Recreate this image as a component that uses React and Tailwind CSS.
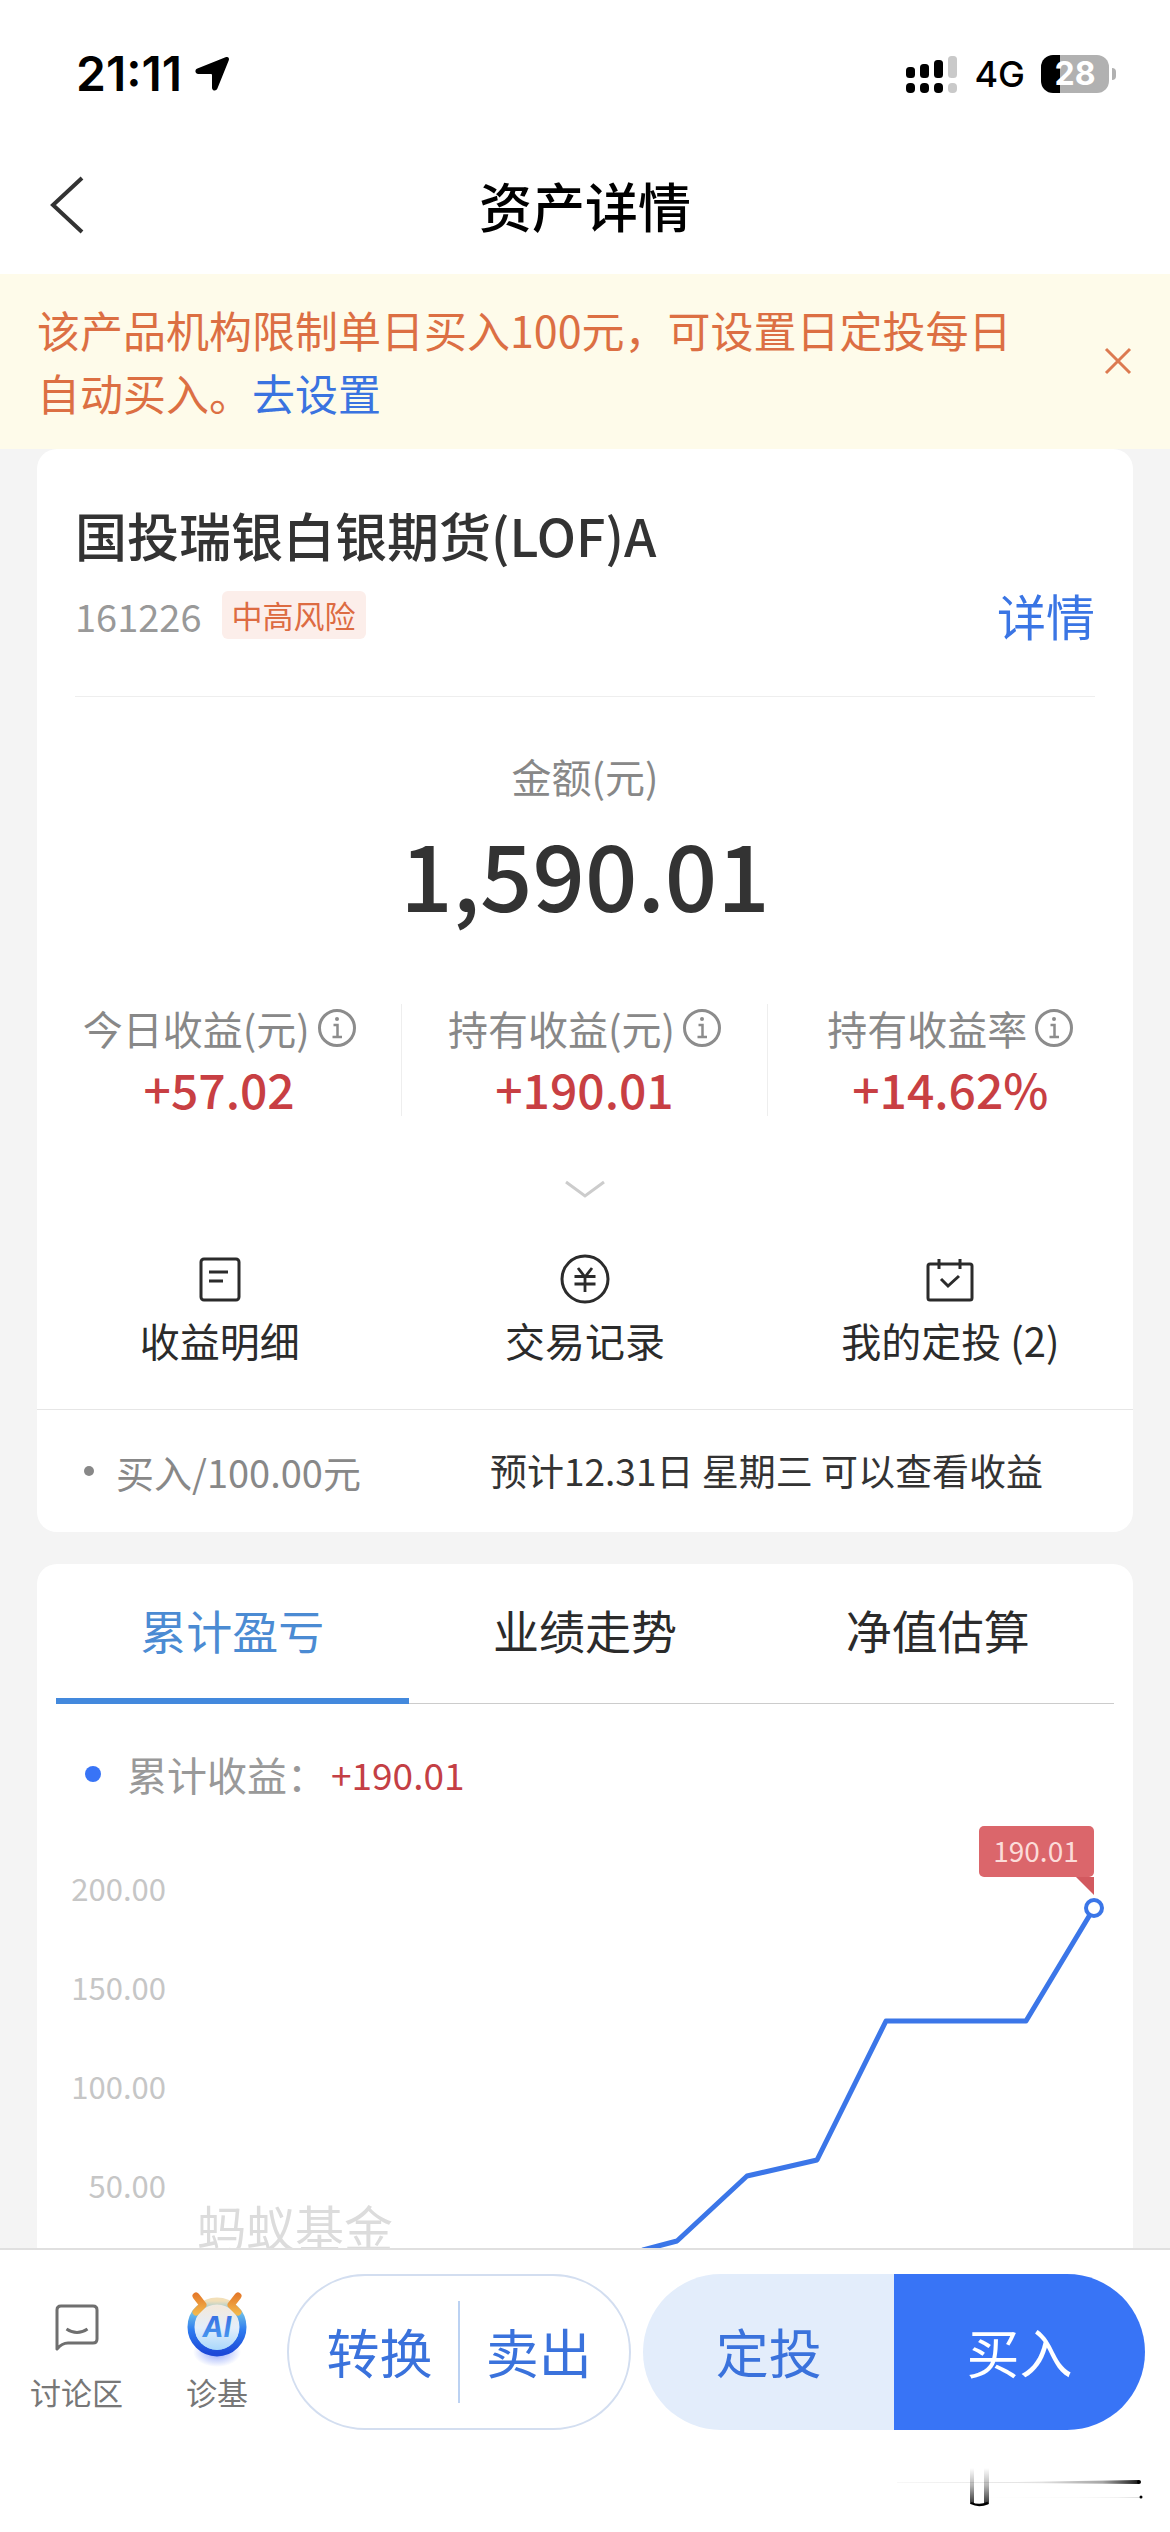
import React, { useState } from 'react';

const stats = [
  { label: '今日收益(元)', value: '+57.02' },
  { label: '持有收益(元)', value: '+190.01' },
  { label: '持有收益率', value: '+14.62%' },
];

const tabs = ['累计盈亏', '业绩走势', '净值估算'];

const yLabels = [
  { text: '200.00', y: 84 },
  { text: '150.00', y: 183 },
  { text: '100.00', y: 282 },
  { text: '50.00', y: 381 },
];

const LocationIcon = () => (
  <svg className="h-9 w-9" viewBox="0 0 36 36" fill="currentColor" aria-hidden="true">
    <path d="M31.500 1.300C34 .2 35.800 2 34.700 4.500L23.400 32.600c-1.200 3-5.400 2.300-5.400-.9V19.200c0-.8-.4-1.200-1.200-1.200H4.300c-3.200 0-4-4.200-.9-5.400z" />
  </svg>
);

const SignalIcon = () => (
  <svg className="h-[38px] w-[52px]" viewBox="0 0 52 38" aria-hidden="true">
    <rect x="0" y="12" width="9" height="11" rx="3.500" />
    <rect x="14" y="9" width="9" height="14" rx="3.500" />
    <rect x="28" y="5" width="9" height="18" rx="3.500" />
    <rect x="42" y="1" width="9" height="22" rx="3.500" fill="#c9c9c9" />
    <rect x="0" y="28" width="9" height="10" rx="4" />
    <rect x="14" y="28" width="9" height="10" rx="4" />
    <rect x="28" y="28" width="9" height="10" rx="4" />
    <rect x="42" y="28" width="9" height="10" rx="4" fill="#c9c9c9" />
  </svg>
);

const InfoIcon = () => (
  <svg className="h-[38px] w-[38px] text-[#8c8c8c]" viewBox="0 0 38 38" fill="none" stroke="currentColor" aria-hidden="true">
    <circle cx="19" cy="19" r="17.500" strokeWidth="3" />
    <path d="M15.500 16H19.500V27.500M14.500 28H24" strokeWidth="2.500" />
    <circle cx="19" cy="10" r="2" fill="currentColor" stroke="none" />
  </svg>
);

const DetailIcon = () => (
  <svg className="h-[50px] w-[50px]" viewBox="0 0 50 50" fill="none" stroke="currentColor" strokeWidth="3" aria-hidden="true">
    <rect x="6" y="5" width="38" height="41" rx="3" />
    <path d="M14 18H33M14 27H28" />
  </svg>
);

const YenIcon = () => (
  <svg className="h-[50px] w-[50px]" viewBox="0 0 50 50" fill="none" stroke="currentColor" strokeWidth="3" aria-hidden="true">
    <circle cx="25" cy="25" r="23" />
    <path d="M18 14L25 23L32 14M14.500 22.500H35.500M14.500 30H35.500M25 22V38" strokeWidth="2.800" />
  </svg>
);

const PlanIcon = () => (
  <svg className="h-[50px] w-[50px]" viewBox="0 0 50 50" fill="none" stroke="currentColor" strokeWidth="3" aria-hidden="true">
    <rect x="3" y="10" width="44" height="36" rx="2" />
    <path d="M14 5V15M35 5V15" />
    <path d="M16 25L23 32L34 22" />
  </svg>
);

const ChatIcon = () => (
  <svg className="h-12 w-[46px]" viewBox="0 0 46 48" fill="none" stroke="#6f6f6f" strokeWidth="3" strokeLinejoin="round" aria-hidden="true">
    <path d="M3 45V6Q3 2 7 2H39Q43 2 43 6V35Q43 39 39 39H14Q8 39 3 45Z" />
    <path d="M12.500 25Q23 32 33.500 25" />
  </svg>
);

const RobotIcon = () => (
  <svg className="h-[76px] w-16" viewBox="0 0 64 76" fill="none" aria-hidden="true">
    <defs>
      <linearGradient id="ring" x1="0" y1="0" x2="0" y2="1">
        <stop offset="0" stopColor="#f2dfb8" />
        <stop offset="0.220" stopColor="#6fbfe6" />
        <stop offset="0.550" stopColor="#2f7df0" />
        <stop offset="1" stopColor="#1c49d8" />
      </linearGradient>
      <linearGradient id="face" x1="0" y1="0" x2="0" y2="1">
        <stop offset="0" stopColor="#f3e9dc" />
        <stop offset="0.500" stopColor="#e3eefb" />
        <stop offset="1" stopColor="#a9d8fb" />
      </linearGradient>
      <linearGradient id="horn" gradientUnits="userSpaceOnUse" x1="0" y1="2" x2="0" y2="22">
        <stop offset="0" stopColor="#e57a2a" />
        <stop offset="1" stopColor="#f2b84c" />
      </linearGradient>
      <linearGradient id="letters" x1="0" y1="0" x2="0" y2="1">
        <stop offset="0" stopColor="#3566e0" />
        <stop offset="1" stopColor="#49a0f2" />
      </linearGradient>
      <radialGradient id="glow">
        <stop offset="0" stopColor="#8ea4fa" />
        <stop offset="1" stopColor="#8ea4fa" stopOpacity="0" />
      </radialGradient>
    </defs>
    <ellipse cx="32" cy="60" rx="24" ry="15" fill="url(#glow)" />
    <circle cx="32" cy="35" r="26" fill="url(#face)" stroke="url(#ring)" strokeWidth="7" />
    <path d="M11 4L18 13L11 20M53 4L46 13L53 20" stroke="url(#horn)" strokeWidth="7" strokeLinecap="round" strokeLinejoin="round" />
    <circle cx="32" cy="36" r="22" fill="url(#face)" />
    <text x="32" y="45" textAnchor="middle" fill="url(#letters)" className="font-['Inter',sans-serif] text-[28px] font-bold italic">AI</text>
  </svg>
);

const ProfitChart = () => (
  <svg className="mt-2 block h-auto w-full" viewBox="0 0 1096 480" fill="none" role="img" aria-label="累计收益">
    <g fill="#c6c6c6" className="text-[31px]" textAnchor="end">
      {yLabels.map((l) => (
        <text key={l.text} x="129" y={l.y + 11}>{l.text}</text>
      ))}
    </g>
    <text x="160" y="441" fill="#dcdcdc" className="text-[49px]">蚂蚁基金</text>
    <path d="M560 466L606 444L640 435L710 370L780 354L849 215H989L1057 102" stroke="#3b76e8" strokeWidth="5" strokeLinejoin="round" />
    <circle cx="1057" cy="102" r="8" fill="#fff" stroke="#3b76e8" strokeWidth="4" />
    <path d="M1039 71H1057V89Z" fill="#d2595f" />
    <rect x="942" y="20" width="115" height="51" rx="5" fill="#db666b" />
    <text x="999" y="56" textAnchor="middle" fill="#fbdcd9" className="text-[28px]">190.01</text>
  </svg>
);

// half-faded strokes under the action buttons
const CornerMark = () => (
  <svg className="h-10 w-[248px]" viewBox="0 0 248 40" fill="none" aria-hidden="true">
    <defs>
      <linearGradient id="fadeRight" x1="0" x2="1">
        <stop offset="0" stopColor="#000" stopOpacity="0.030" />
        <stop offset="0.600" stopColor="#000" stopOpacity="0.120" />
        <stop offset="0.850" stopColor="#000" stopOpacity="0.350" />
        <stop offset="1" stopColor="#000" stopOpacity="0.900" />
      </linearGradient>
      <linearGradient id="fadeDown" x1="0" y1="0" x2="0" y2="1">
        <stop offset="0" stopColor="#000" stopOpacity="0" />
        <stop offset="0.500" stopColor="#000" stopOpacity="0.300" />
        <stop offset="1" stopColor="#000" stopOpacity="0.800" />
      </linearGradient>
    </defs>
    <path d="M0 14H120L242 12V16L120 15H0Z" fill="url(#fadeRight)" />
    <path d="M90 29H244V30H90Z" fill="url(#fadeRight)" opacity="0.150" />
    <path d="M73 0H77V36H73ZM87 0H92V36H87Z" fill="url(#fadeDown)" />
    <path d="M74 35Q82 39 91 35" stroke="#000" strokeWidth="2.500" />
    <circle cx="242" cy="14" r="2" fill="#000" />
    <circle cx="244" cy="29" r="1.500" fill="#000" />
  </svg>
);

const ActionItem = ({ icon, label }) => (
  <button type="button" className="flex flex-col items-center gap-3 text-[40px] leading-[48px] text-[#2b2b2b]">
    {icon}
    <span>{label}</span>
  </button>
);

export default function App() {
  const [activeTab, setActiveTab] = useState(tabs[0]);
  const [showNotice, setShowNotice] = useState(true);

  return (
    <div className="flex h-screen flex-col bg-[#f4f4f4] font-['Noto_Sans_CJK_SC',sans-serif] text-[#333]">
      <div className="flex h-[140px] shrink-0 items-center justify-between bg-white pt-2 pr-[54px] pl-[76px] font-['Inter',sans-serif] text-black">
        <div className="flex items-center gap-3">
          <span className="text-[48px] leading-none font-semibold">21:11</span>
          <LocationIcon />
        </div>
        <div className="flex items-center gap-4">
          <SignalIcon />
          <span className="text-[36px] leading-none font-medium">4G</span>
          <div className="flex items-center gap-[3px]">
            <div className="flex h-[38px] w-[68px] items-center justify-center rounded-[12px] bg-linear-to-r from-black from-28% to-[#b1b1b1] to-28% text-[32px] leading-none font-bold text-white">
              28
            </div>
            <div className="h-3 w-1 rounded-r-full bg-[#b1b1b1]" />
          </div>
        </div>
      </div>

      <header className="grid h-[134px] shrink-0 grid-cols-3 items-center bg-white px-[50px] pb-1">
        <button type="button" aria-label="返回" className="justify-self-start">
          <svg className="h-[58px] w-[34px]" viewBox="0 0 34 58" fill="none" stroke="#333" strokeWidth="4" aria-hidden="true">
            <path d="M32 2L3 29L32 56" />
          </svg>
        </button>
        <h1 className="text-center text-[53px] leading-[64px] font-medium whitespace-nowrap text-black">资产详情</h1>
      </header>

      {showNotice && (
        <div className="flex shrink-0 items-center justify-between gap-16 bg-[#fefbea] px-[37px] pt-6 pb-[25px]">
          <p className="text-[43px] leading-[63px] text-[#dc6f43]">
            该产品机构限制单日买入100元，可设置日定投每日自动买入。
            <a href="#plan" className="text-[#3a73e0]">去设置</a>
          </p>
          <button type="button" aria-label="关闭" onClick={() => setShowNotice(false)}>
            <svg className="h-[30px] w-[30px]" viewBox="0 0 30 30" stroke="#dc7a50" strokeWidth="3" aria-hidden="true">
              <path d="M3 3L27 27M27 3L3 27" />
            </svg>
          </button>
        </div>
      )}

      <main className="flex min-h-0 flex-1 flex-col gap-8 overflow-hidden px-[37px]">
        <section className="shrink-0 rounded-[20px] bg-white pt-[54px]">
          <div className="mx-[38px] border-b border-[#eee] pb-[53px]">
            <h2 className="text-[52px] leading-[64px] font-medium">国投瑞银白银期货(LOF)A</h2>
            <div className="mt-5 flex h-14 items-center">
              <span className="text-[38px] text-[#999]">161226</span>
              <span className="ml-5 rounded-md bg-[#fceeea] px-[10px] text-[31px] leading-[48px] text-[#dd6b42]">中高风险</span>
              <a href="#detail" className="ml-auto text-[49px] leading-[56px] text-[#3a75e4]">详情</a>
            </div>
          </div>

          <div className="mt-[55px] text-center">
            <div className="text-[40px] leading-[48px] text-[#888]">金额(元)</div>
            <div className="mt-[22px] text-[92px] leading-[100px] font-medium">1,590.01</div>
          </div>

          <div className="mt-[82px] grid grid-cols-3 divide-x divide-[#eee]">
            {stats.map((s) => (
              <div key={s.label} className="flex flex-col items-center gap-2">
                <div className="flex items-center gap-2 text-[40px] leading-[48px] text-[#888]">
                  <span>{s.label}</span>
                  <InfoIcon />
                </div>
                <div className="text-[48px] leading-[56px] font-medium text-[#c83f43]">{s.value}</div>
              </div>
            ))}
          </div>

          <button type="button" aria-label="展开" className="mx-auto mt-[60px] block">
            <svg className="h-7 w-[42px]" viewBox="0 0 42 28" fill="none" stroke="#ccc" strokeWidth="3" aria-hidden="true">
              <path d="M2 6L21 20L40 6" />
            </svg>
          </button>

          <div className="mt-[50px] grid grid-cols-3 pb-[45px]">
            <ActionItem icon={<DetailIcon />} label="收益明细" />
            <ActionItem icon={<YenIcon />} label="交易记录" />
            <ActionItem icon={<PlanIcon />} label="我的定投 (2)" />
          </div>

          <div className="flex h-[123px] items-center border-t border-[#e6e6e6] pr-[90px] pl-[47px]">
            <span className="mr-[22px] h-[10px] w-[10px] rounded-full bg-[#888]" />
            <span className="text-[38px] text-[#888]">买入/100.00元</span>
            <span className="ml-auto text-[37px]">预计12.31日 星期三 可以查看收益</span>
          </div>
        </section>

        <section className="shrink-0 rounded-t-[20px] bg-white">
          <div role="tablist" className="mx-[19px] flex border-b border-[#ccc]">
            {tabs.map((tab) => (
              <button
                key={tab}
                type="button"
                role="tab"
                aria-selected={activeTab === tab}
                onClick={() => setActiveTab(tab)}
                className={`-mb-px h-[140px] flex-1 border-b-[6px] pb-1 text-[46px] ${
                  activeTab === tab ? 'border-[#4389dd] text-[#4b8bd3]' : 'border-transparent text-[#2b2b2b]'
                }`}
              >
                {tab}
              </button>
            ))}
          </div>

          <div className="mt-[46px] flex items-center pl-12 leading-[48px]">
            <span className="mr-[26px] h-4 w-4 rounded-full bg-[#3874f6]" />
            <span className="mr-1 text-[40px] text-[#999]">累计收益：</span>
            <span className="text-[37px] text-[#c43f45]">+190.01</span>
          </div>

          <ProfitChart />
        </section>
      </main>

      <footer className="shrink-0 border-t-2 border-[#e0e0e0] bg-white pt-6">
        <div className="flex items-center pr-[25px] pl-[30px]">
          <button type="button" className="flex h-[156px] flex-col items-center justify-end gap-5 pb-[18px] text-[31px] leading-[40px] text-[#777]">
            <ChatIcon />
            <span>讨论区</span>
          </button>
          <button type="button" className="ml-[62px] flex h-[156px] flex-col items-center justify-end gap-1 pb-[18px] text-[31px] leading-[40px] text-[#777]">
            <RobotIcon />
            <span>诊基</span>
          </button>
          <div className="ml-[38px] flex h-[156px] flex-[342] items-center rounded-full border-2 border-[#d3def0] text-[53px] text-[#3a72dc]">
            <button type="button" className="flex-1 pl-3">转换</button>
            <span className="h-[102px] w-[2px] bg-[#bcd2f2]" />
            <button type="button" className="flex-1 pr-3">卖出</button>
          </div>
          <div className="ml-3 flex h-[156px] flex-[504] overflow-hidden rounded-full text-[53px]">
            <button type="button" className="flex-1 bg-[#e3edfb] text-[#3a72dc]">定投</button>
            <button type="button" className="flex-1 bg-[#3874f6] text-white">买入</button>
          </div>
        </div>
        <div className="flex h-[102px] items-center justify-end pt-[14px] pr-[25px]">
          <CornerMark />
        </div>
      </footer>
    </div>
  );
}
